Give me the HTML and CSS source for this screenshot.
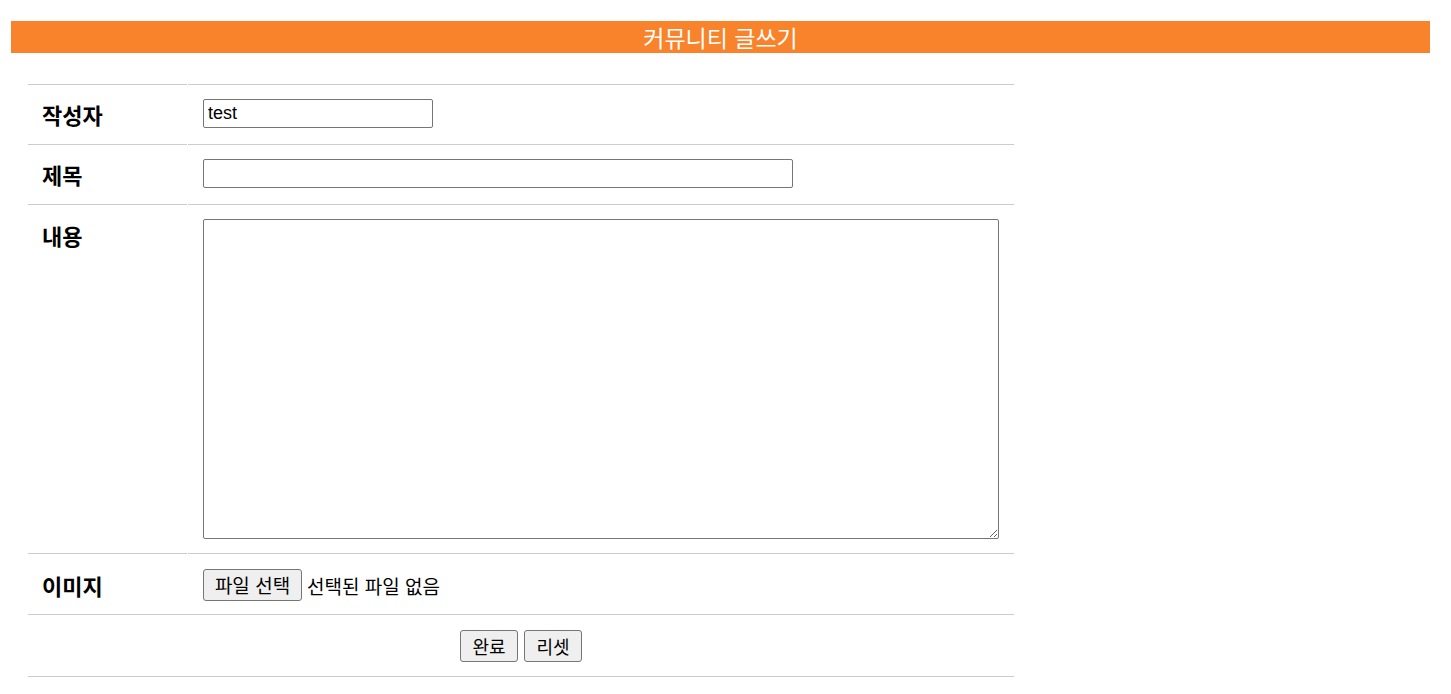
FILE: index.html
```html
<!DOCTYPE html>
<html lang="ko">
<head>
<meta charset="utf-8">
<title>커뮤니티 글쓰기</title>
<link rel="stylesheet" href="styles.css">
</head>
<body>
<div class="page">
  <h1 class="title-bar">커뮤니티 글쓰기</h1>
  <form class="write-form">
    <table class="write-table">
      <tr class="row-short">
        <th class="label">작성자</th>
        <td class="field"><input type="text" class="input-writer" value="test"></td>
      </tr>
      <tr class="row-short">
        <th class="label">제목</th>
        <td class="field"><input type="text" class="input-title"></td>
      </tr>
      <tr class="row-content">
        <th class="label label-top">내용</th>
        <td class="field field-top"><textarea class="input-content"></textarea></td>
      </tr>
      <tr class="row-file">
        <th class="label">이미지</th>
        <td class="field"><button type="button" class="btn btn-file">파일 선택</button><span class="file-status">선택된 파일 없음</span></td>
      </tr>
      <tr class="row-actions">
        <td class="actions" colspan="2"><button type="button" class="btn">완료</button><button type="button" class="btn">리셋</button></td>
      </tr>
    </table>
  </form>
</div>
</body>
</html>
```

FILE: styles.css
```css
html, body {
  margin: 0;
  padding: 0;
  background: #fff;
}

body {
  font-family: "Noto Sans CJK KR", "Liberation Sans", sans-serif;
  color: #000;
}

.page {
  padding: 21px 21px 0 11px;
}

.title-bar {
  margin: 0;
  height: 32px;
  line-height: 32px;
  background: #f8832a;
  color: #fff;
  font-size: 23px;
  font-weight: normal;
  text-align: center;
}

.write-form {
  margin: 31px 0 0 16px;
}

.write-table {
  width: 988px;
  border-collapse: separate;
  border-spacing: 1px 0;
}

.write-table th,
.write-table td {
  border-top: 1px solid #cccccc;
  padding: 0 15px;
  vertical-align: middle;
}

.write-table tr:last-child td {
  border-bottom: 1px solid #cccccc;
}

.label {
  width: 130px;
  text-align: left;
  font-size: 22px;
  font-weight: bold;
  padding-left: 14px !important;
}

.row-short th,
.row-short td {
  height: 57px;
  padding-bottom: 2px;
}

.row-file th,
.row-file td {
  height: 58px;
  padding-top: 2px;
}

.row-actions td {
  height: 61px;
}

.label-top {
  vertical-align: top !important;
  padding-top: 14px !important;
}

.field-top {
  vertical-align: top !important;
  padding-top: 14px !important;
  padding-bottom: 14px !important;
}

input[type="text"] {
  box-sizing: border-box;
  height: 29px;
  font-family: "Liberation Sans", sans-serif;
  font-size: 18px;
  padding: 1px 4px;
  border: 1px solid #767676;
  border-radius: 2px;
  vertical-align: middle;
}

.input-writer {
  width: 230px;
}

.input-title {
  width: 590px;
}

.input-content {
  display: block;
  box-sizing: border-box;
  width: 796px;
  height: 320px;
  border: 1px solid #767676;
  border-radius: 2px;
  margin: 0;
}

.btn {
  box-sizing: border-box;
  height: 32px;
  font-family: "Noto Sans CJK KR", sans-serif;
  font-size: 18px;
  padding: 0;
  background: #efefef;
  border: 1px solid #767676;
  border-radius: 3px;
  color: #000;
  vertical-align: middle;
  line-height: 28px;
}

.btn-file {
  width: 99px;
  font-size: 19px;
}

.file-status {
  font-size: 19px;
  margin-left: 5px;
  vertical-align: middle;
}

.actions {
  text-align: center;
}

.actions .btn {
  width: 58px;
  margin: 0 3px;
}
```
